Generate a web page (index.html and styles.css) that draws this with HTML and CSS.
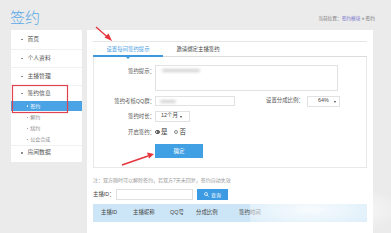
FILE: index.html
```html
<!DOCTYPE html>
<html lang="zh-CN">
<head>
<meta charset="utf-8">
<title>签约</title>
<link rel="stylesheet" href="styles.css">
</head>
<body>
<header class="top">
  <h1 class="title">签约</h1>
  <div class="crumb">当前位置：<a>签约模块</a> » 签约</div>
</header>
<div class="wrap">
  <aside class="side">
    <ul class="menu">
      <li class="item"><i class="dot"></i>首页</li>
      <li class="item"><i class="dot"></i>个人资料</li>
      <li class="item"><i class="dot"></i>主播管理</li>
      <li class="group">
        <div class="head"><i class="dot"></i>签约信息</div>
        <ul class="sub">
          <li class="on"><i class="sdot"></i>签约</li>
          <li><i class="sdot"></i>解约</li>
          <li><i class="sdot"></i>续约</li>
          <li><i class="sdot"></i>公会合成</li>
        </ul>
      </li>
      <li class="item last"><i class="dot"></i>房间数据</li>
    </ul>
  </aside>
  <main class="main">
    <div class="tabs">
      <div class="tab active">设置每间签约提示</div>
      <div class="tab">邀请绑定主播签约</div>
    </div>
    <div class="form">
      <div class="row">
        <label class="lbl">签约提示：</label>
        <div class="textarea"><span class="blur b1"></span></div>
      </div>
      <div class="row r2">
        <label class="lbl">签约考核QQ群：</label>
        <div class="input"><span class="blur b2"></span></div>
        <label class="ratio">设置分成比例：</label>
        <div class="select s64">64% <b class="tri"></b></div>
      </div>
      <div class="row r3">
        <label class="lbl">签约时长：</label>
        <div class="select s12">12个月<b class="tri"></b></div>
      </div>
      <div class="row r4">
        <label class="lbl">开启签约：</label>
        <span class="radio on"></span><span class="opt">是</span>
        <span class="radio"></span><span class="opt">否</span>
      </div>
      <div class="row r5">
        <button class="btn">确定</button>
      </div>
    </div>
    <p class="note">注：双方随时可以解除签约，若双方7天未回复，签约自动失效</p>
    <div class="search">
      <label class="slbl">主播ID：</label>
      <div class="sinput"></div>
      <button class="sbtn"><svg class="mag" viewBox="0 0 10 10" width="5" height="5"><circle cx="4" cy="4" r="3" fill="none" stroke="#fff" stroke-width="1.4"/><line x1="6.2" y1="6.2" x2="9" y2="9" stroke="#fff" stroke-width="1.6"/></svg>查询</button>
    </div>
    <div class="thead">
      <span>主播ID</span><span>主播昵称</span><span>QQ号</span><span>分成比例</span><span>签约时间</span>
    </div>
  </main>
</div>
<div class="mark"></div>
<svg class="notes" width="391" height="233" viewBox="0 0 391 233">
  <rect x="12.5" y="85.5" width="55" height="27" fill="none" stroke="#e0434f" stroke-width="1.2"/>
  <line x1="96" y1="27" x2="108" y2="37.5" stroke="#e5343c" stroke-width="1.3"/>
  <polygon points="112,41 104.5,37.5 108.5,33.5" fill="#e5343c"/>
  <line x1="122" y1="165" x2="148" y2="156" stroke="#e5343c" stroke-width="1.5"/>
  <polygon points="154,154 147,152.5 149,158.5" fill="#e5343c"/>
</svg>
</body>
</html>
```
FILE: styles.css
```css
* { box-sizing: border-box; margin: 0; padding: 0; }
ul { list-style: none; }
body {
  width: 391px; height: 233px; overflow: hidden; position: relative;
  background: #ebebeb;
  font-family: "Liberation Sans", "Noto Sans CJK SC", sans-serif;
  color: #555; font-size: 6px; line-height: 1;
}
.top { height: 30px; display: flex; justify-content: space-between; align-items: flex-start; padding: 0 16px 0 10px; }
.title { font-family: "Noto Sans CJK SC", sans-serif; font-size: 15px; font-weight: 300; color: #5aa8e6; line-height: 20px; margin-top: 7px; }
.crumb { font-size: 4.7px; margin-top: 17px; color: #777; }
.crumb a { color: #7470cc; }

.wrap { display: flex; gap: 5px; padding-left: 11px; }
.side { width: 71px; height: 132px; background: #fff; }
.menu .item { height: 18px; display: flex; align-items: center; padding-left: 10px; border-bottom: 1px solid #f1f1f1; font-size: 5.8px; color: #555; }
.menu .item:first-child { height: 20px; }
.menu .item.last { height: 15px; border-bottom: 0; border-top: 1px solid #f1f1f1; }
.dot { width: 1.5px; height: 1.5px; border-radius: 50%; background: #777; margin-right: 5px; display: inline-block; }
.head { height: 15px; display: flex; align-items: center; padding-left: 10px; font-size: 5.8px; color: #555; }
.sub li { height: 11px; display: flex; align-items: center; padding-left: 16px; font-size: 5px; color: #888; }
.sub li.on { background: #4aa3e5; color: #fff; height: 10px; margin-bottom: 1px; }
.sdot { width: 1.2px; height: 1.2px; border-radius: 50%; background: currentColor; margin-right: 2px; display: inline-block; }

.main { width: 286px; height: 203px; background: #fff; padding: 11px 6px 0; }
.tabs { display: flex; height: 16px; border-top: 1px solid #e6e6e6; border-bottom: 1px solid #dcdcdc; }
.tab { width: 70px; text-align: center; line-height: 14px; font-size: 5.4px; color: #444; position: relative; }
.tab.active { color: #4a9de0; }
.tab.active::after { content: ""; position: absolute; left: 0; right: 0; bottom: -1px; height: 2px; background: #3d98de; }
.tab.active::before { content: ""; position: absolute; left: 33px; bottom: -3px; border: 2px solid transparent; border-top-color: #3d98de; border-bottom: 0; }

.form { height: 111px; border: 1px solid #e8e8e8; border-top: 0; padding-top: 8px; }
.row { display: flex; align-items: center; }
.row:first-child { align-items: flex-start; }
.lbl { width: 61px; text-align: right; font-size: 5.4px; color: #555; line-height: 12px; }
.row:first-child .lbl { line-height: 12px; }
.textarea { width: 183px; height: 26px; border: 1px solid #e2e2e2; position: relative; }
.blur { position: absolute; background: #cfcfcf; border-radius: 2px; filter: blur(1.5px); }
.b1 { left: 6px; top: 3px; width: 38px; height: 3px; }
.b2 { left: 4px; top: 3px; width: 16px; height: 3px; }
.r2 { margin-top: 5px; height: 10px; }
.input { width: 80px; height: 10px; border: 1px solid #e2e2e2; position: relative; }
.ratio { margin-left: 31px; font-size: 5.4px; width: 41px; color: #555; }
.select { height: 11px; border: 1px solid #e2e2e2; display: flex; align-items: center; font-size: 5.4px; color: #444; }
.s64 { width: 33px; padding-left: 10px; }
.s12 { width: 35px; padding-left: 5px; }
.tri { display: inline-block; border: 1.6px solid transparent; border-top: 2px solid #444; border-bottom: 0; margin-left: 2px; margin-top: 1px; }
.s64 .tri { margin-left: 5px; }
.r3 { margin-top: 4px; }
.r4 { margin-top: 5px; height: 10px; }
.radio { width: 4.5px; height: 4.5px; border-radius: 50%; border: 0.7px solid #888; display: inline-block; position: relative; }
.radio.on { border-color: #555; }
.radio.on::after { content: ""; position: absolute; left: 0.6px; top: 0.6px; width: 2px; height: 2px; border-radius: 50%; background: #444; }
.opt { font-size: 6.5px; color: #333; margin: 0 6px 0 1.5px; }
.r5 { margin-top: 7px; padding-left: 61px; }
.btn { width: 48px; height: 14px; border: 0; background: #419fe4; color: #fff; font-family: "Noto Sans CJK SC", sans-serif; font-size: 5.5px; }

.note { margin-top: 8px; font-size: 5px; line-height: 8px; color: #999; }
.search { display: flex; align-items: center; margin-top: 5px; height: 11px; }
.slbl { width: 23px; font-size: 5.4px; color: #444; }
.sinput { width: 77px; height: 11px; border: 1px solid #e0e0e0; }
.sbtn { margin-left: 4px; width: 31px; height: 11px; border: 0; background: #3d9be3; color: #fff; font-family: "Noto Sans CJK SC", sans-serif; font-size: 5px; display: flex; align-items: center; justify-content: center; gap: 2px; }
.thead { margin-top: 4px; height: 18px; background: #cde6f7; display: grid; grid-template-columns: 32px 37px 26px 43px 1fr; padding-left: 8px; align-items: center; font-size: 5.4px; color: #444; }

.mark { position: absolute; left: 250px; top: 185px; width: 150px; height: 45px; background: radial-gradient(ellipse at 40% 55%, rgba(255,255,255,0.85), rgba(255,255,255,0.4) 50%, rgba(255,255,255,0) 75%); pointer-events: none; }
.notes { position: absolute; left: 0; top: 0; pointer-events: none; }
```
